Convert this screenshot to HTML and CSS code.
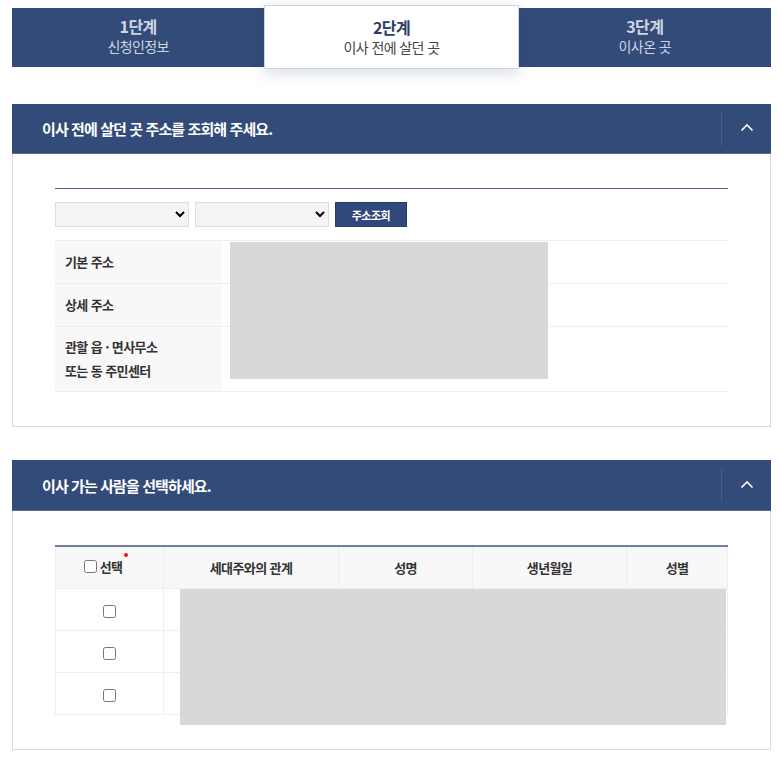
FILE: index.html
```html
<!DOCTYPE html>
<html lang="ko">
<head>
<meta charset="utf-8">
<link rel="stylesheet" href="styles.css">
</head>
<body>
<div class="page">
  <div class="steps">
    <div class="step"><div class="step-num">1단계</div><div class="step-name">신청인정보</div></div>
    <div class="step active"><div class="step-num">2단계</div><div class="step-name">이사 전에 살던 곳</div></div>
    <div class="step"><div class="step-num">3단계</div><div class="step-name">이사온 곳</div></div>
  </div>

  <section class="panel">
    <div class="panel-head">
      <h2 class="panel-title">이사 전에 살던 곳 주소를 조회해 주세요.</h2>
      <div class="toggle"><svg width="14" height="9" viewBox="0 0 14 9"><polyline points="1.5,7.5 7,2 12.5,7.5" fill="none" stroke="#fff" stroke-width="1.6"/></svg></div>
    </div>
    <div class="panel-body">
      <div class="topline"></div>
      <div class="search">
        <select class="sel"><option></option></select>
        <select class="sel"><option></option></select>
        <button class="btn">주소조회</button>
      </div>
      <div class="tbl-wrap">
        <table class="info">
          <tr class="r1"><th>기본 주소</th><td></td></tr>
          <tr class="r2"><th>상세 주소</th><td></td></tr>
          <tr class="r3"><th>관할 읍 · 면사무소<br>또는 동 주민센터</th><td></td></tr>
        </table>
        <div class="mask mask1"></div>
      </div>
    </div>
  </section>

  <section class="panel second">
    <div class="panel-head">
      <h2 class="panel-title">이사 가는 사람을 선택하세요.</h2>
      <div class="toggle"><svg width="14" height="9" viewBox="0 0 14 9"><polyline points="1.5,7.5 7,2 12.5,7.5" fill="none" stroke="#fff" stroke-width="1.6"/></svg></div>
    </div>
    <div class="panel-body">
      <div class="tbl-wrap">
        <table class="people">
          <tr class="hrow">
            <th class="c1"><span class="req"><input type="checkbox" class="chk">선택<i class="dot"></i></span></th>
            <th class="c2">세대주와의 관계</th>
            <th class="c3">성명</th>
            <th class="c4">생년월일</th>
            <th class="c5">성별</th>
          </tr>
          <tr><td><input type="checkbox" class="chk"></td><td></td><td></td><td></td><td></td></tr>
          <tr><td><input type="checkbox" class="chk"></td><td></td><td></td><td></td><td></td></tr>
          <tr><td><input type="checkbox" class="chk"></td><td></td><td></td><td></td><td></td></tr>
        </table>
        <div class="mask mask2"></div>
      </div>
    </div>
  </section>
</div>
</body>
</html>
```

FILE: styles.css
```css
* { box-sizing: border-box; }
html, body { margin: 0; padding: 0; background: #fff; }
body {
  font-family: "Noto Sans CJK KR", "Noto Sans", sans-serif;
  color: #333;
}
.page {
  width: 759px;
  margin-left: 12px;
  padding-top: 8px;
  padding-bottom: 10px;
}
.steps {
  display: flex;
  height: 59px;
  background: #334b78;
}
.step {
  flex: 1 1 0;
  display: flex;
  flex-direction: column;
  align-items: center;
  justify-content: center;
  color: #cfd5e1;
  letter-spacing: -0.6px;
  padding-bottom: 3px;
}
.step-num { font-size: 16px; font-weight: 700; line-height: 20px; }
.step-name { font-size: 14px; font-weight: 400; line-height: 20px; }
.step.active {
  background: #fff;
  margin: -3px 0 -2px;
  border: 1px solid #cfd6e3;
  box-shadow: 0 4px 14px rgba(40, 60, 100, 0.18);
  color: #444;
  position: relative;
  z-index: 1;
  padding-bottom: 0;
}
.step.active .step-num { color: #2c3d63; }

.panel { margin-top: 37px; }
.panel.second { margin-top: 33px; }
.panel-head {
  height: 50px;
  background: #334b78;
  display: flex;
  align-items: center;
  border-bottom: 1px solid #5c6f92;
}
.panel.second .panel-head { height: 51px; }
.panel-title {
  flex: 1;
  margin: 0;
  padding-left: 30px;
  font-size: 15px;
  font-weight: 700;
  color: #fff;
  letter-spacing: -0.9px;
}
.toggle {
  width: 50px;
  height: 34px;
  border-left: 1px solid #4a5f88;
  display: flex;
  align-items: center;
  justify-content: center;
  padding-bottom: 2px;
}
.panel-body {
  border: 1px solid #dcdcdc;
  border-top: 0;
  padding: 34px 42px 34px;
}
.topline { height: 1px; background: #4b6491; }
.search {
  display: flex;
  gap: 6px;
  margin-top: 13px;
  height: 25px;
}
.sel {
  width: 134px;
  height: 25px;
  border: 1px solid #dddddd;
  background: #f4f4f4;
  font-family: inherit;
}
.btn {
  width: 72px;
  height: 25px;
  background: #30497a;
  border: 1px solid #263c66;
  color: #fff;
  font-family: inherit;
  font-size: 11px;
  font-weight: 700;
  letter-spacing: -0.5px;
  padding: 0;
}
.tbl-wrap { position: relative; margin-top: 13px; }
table { border-collapse: collapse; width: 100%; }
.info tr { border-top: 1px solid #eeeeee; border-bottom: 1px solid #eeeeee; }
.info th {
  width: 167px;
  background: #f8f8f8;
  text-align: left;
  padding: 0 10px;
  font-size: 13px;
  font-weight: 700;
  color: #333;
  letter-spacing: -0.6px;
  line-height: 24px;
}
.info .r1 th, .info .r2 th { height: 43px; }
.info .r3 th { height: 65px; }
.mask { position: absolute; background: #d8d8d8; }
.mask1 { left: 175px; top: 2px; width: 318px; height: 137px; }

.panel.second .panel-body { padding-top: 34px; }
.panel.second .tbl-wrap { margin-top: 0; }
.people { border-top: 2px solid #6d7fa0; }
.people th {
  height: 42px;
  background: #f8f8f8;
  border-left: 1px solid #eeeeee;
  border-right: 1px solid #eeeeee;
  font-size: 13px;
  font-weight: 700;
  color: #333;
  letter-spacing: -0.6px;
  text-align: center;
}
.people th.c1 { padding-right: 14px; }
.people td {
  height: 42px;
  border: 1px solid #eeeeee;
  text-align: center;
}
.people .c1 { width: 108px; }
.people .c2 { width: 175px; }
.people .c3 { width: 134px; }
.people .c4 { width: 154px; }
.chk {
  width: 13px;
  height: 13px;
  margin: 0;
  vertical-align: middle;
}
.req { position: relative; display: inline-flex; align-items: center; gap: 3px; }
.dot {
  position: absolute;
  right: -6px;
  top: -4px;
  width: 4px;
  height: 4px;
  border-radius: 50%;
  background: #e8141b;
}
.mask2 { left: 125px; top: 44px; width: 546px; height: 136px; }
```
